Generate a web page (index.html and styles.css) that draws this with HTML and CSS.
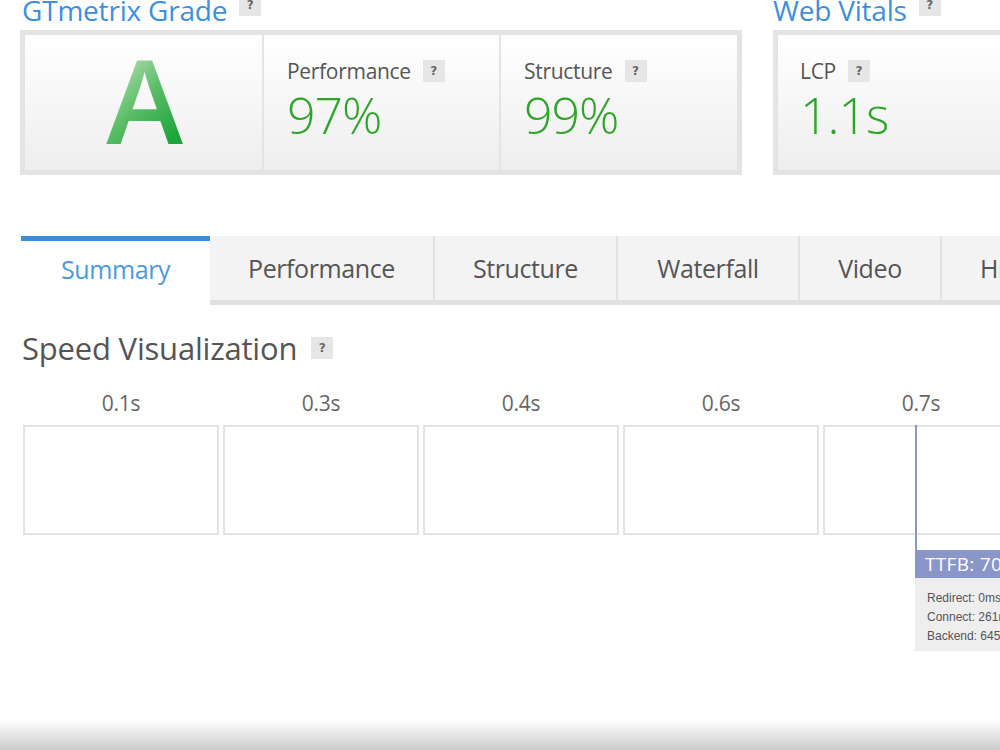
FILE: index.html
```html
<!DOCTYPE html>
<html lang="en">

<head>
    <meta charset="utf-8"/>
    <title>GTmetrix Report</title>
    <link rel="stylesheet" href="styles.css">
</head>

<body>
<div class="report">
    <div class="scores">
        <div class="gradeBlock">
            <h2 class="boxTitle">GTmetrix Grade <span class="help">?</span></h2>
            <div class="box">
                <div class="cell gradeCell"><span class="grade">A</span></div>
                <div class="cell">
                    <div class="label">Performance <span class="help">?</span></div>
                    <div class="value">97%</div>
                </div>
                <div class="cell">
                    <div class="label">Structure <span class="help">?</span></div>
                    <div class="value">99%</div>
                </div>
            </div>
        </div>
        <div class="vitalsBlock">
            <h2 class="boxTitle">Web Vitals <span class="help">?</span></h2>
            <div class="box">
                <div class="cell">
                    <div class="label">LCP <span class="help">?</span></div>
                    <div class="value">1.1s</div>
                </div>
                <div class="cell">
                    <div class="label">TBT <span class="help">?</span></div>
                    <div class="value">0ms</div>
                </div>
            </div>
        </div>
    </div>

    <ul class="tabs">
        <li class="tab active">Summary</li>
        <li class="tab tPerf">Performance</li>
        <li class="tab tStruct">Structure</li>
        <li class="tab tWater">Waterfall</li>
        <li class="tab tVideo">Video</li>
        <li class="tab tHist">History</li>
    </ul>

    <h3 class="sectionTitle">Speed Visualization <span class="help">?</span></h3>

    <div class="film">
        <div class="frame"><div class="time">0.1s</div><div class="shot"></div></div>
        <div class="frame"><div class="time">0.3s</div><div class="shot"></div></div>
        <div class="frame"><div class="time">0.4s</div><div class="shot"></div></div>
        <div class="frame"><div class="time">0.6s</div><div class="shot"></div></div>
        <div class="frame"><div class="time">0.7s</div><div class="shot"></div></div>

        <div class="marker">
            <div class="mLine"></div>
            <div class="mHead">TTFB: 706ms</div>
            <div class="mBody">
                Redirect: 0ms<br>
                Connect: 261ms<br>
                Backend: 645ms
            </div>
        </div>
    </div>
</div>
<div class="fade"></div>
</body>
</html>
```

FILE: styles.css
```css
* {
    padding: 0;
    margin: 0;
}

html,
body {
    height: 100%;
    overflow: hidden;
    background: #fff;
}

body {
    font-family: "Open Sans", "Noto Sans", sans-serif;
    color: #555;
    position: relative;
}

.report {
    width: 1300px;
    padding-left: 20px;
}

.scores {
    display: flex;
    gap: 31px;
    margin-top: -10px;
}

.boxTitle {
    font-weight: normal;
    font-size: 28px;
    line-height: 34px;
    color: #3d8fdc;
    letter-spacing: -0.2px;
    padding-left: 2px;
    height: 40px;
    display: flex;
    align-items: center;
    gap: 12px;
}

.vitalsBlock .boxTitle {
    padding-left: 0;
}

.help {
    display: inline-block;
    width: 22px;
    height: 22px;
    line-height: 22px;
    text-align: center;
    background-color: #e6e6e6;
    color: #666;
    font-family: "DejaVu Sans", sans-serif;
    font-weight: bold;
    font-size: 12px;
    letter-spacing: 0;
}

.boxTitle .help {
    height: 20px;
    line-height: 18px;
    margin-top: -8px;
}

.box {
    display: flex;
    border: 5px solid #e3e3e3;
    height: 135px;
    background: linear-gradient(#fff, #eee);
}

.gradeBlock .box {
    width: 712px;
}

.vitalsBlock .box {
    width: 480px;
}

.cell {
    width: 237px;
    padding: 24px 0 0 23px;
    box-sizing: border-box;
    border-left: 2px solid #e4e4e4;
}

.cell:first-child {
    border-left: none;
}

.vitalsBlock .cell:first-child {
    padding-left: 22px;
}

.gradeCell {
    padding: 0;
    display: flex;
    align-items: center;
    justify-content: center;
}

.grade {
    font-size: 116px;
    line-height: 1;
    font-weight: 600;
    background: linear-gradient(135deg, #b8e0b1 15%, #5cbd68 50%, #1ea43c 85%);
    -webkit-background-clip: text;
    background-clip: text;
    color: transparent;
    margin-top: -8px;
    margin-left: 2px;
}

.label {
    font-size: 21px;
    line-height: 24px;
    color: #555;
    letter-spacing: -0.3px;
    display: flex;
    align-items: center;
    gap: 12px;
}

.value {
    font-size: 50px;
    line-height: 46px;
    font-weight: 300;
    color: #2ea52a;
    letter-spacing: -1px;
    margin-top: 9px;
}

.tabs {
    list-style: none;
    display: flex;
    margin-top: 61px;
    padding-left: 1px;
}

.tab {
    height: 64px;
    line-height: 64px;
    text-align: center;
    font-size: 25px;
    color: #555;
    letter-spacing: -0.4px;
    background-color: #f3f3f3;
    border-left: 2px solid #e2e2e2;
    border-bottom: 5px solid #e0e0e0;
}

.tab.active {
    width: 189px;
    background-color: #fff;
    color: #4a9ae0;
    border-left: none;
    border-top: 5px solid #3b8fd9;
    border-bottom: 5px solid #fff;
    height: 59px;
    line-height: 56px;
}

.tPerf {
    width: 223px;
    border-left: none;
}

.tStruct {
    width: 181px;
}

.tWater {
    width: 180px;
}

.tVideo {
    width: 140px;
}

.tHist {
    width: 160px;
    text-align: left;
    padding-left: 38px;
}

.sectionTitle {
    font-weight: normal;
    font-size: 31px;
    line-height: 40px;
    color: #555;
    letter-spacing: -0.2px;
    margin-top: 23px;
    padding-left: 2px;
    display: flex;
    align-items: center;
    gap: 14px;
}

.film {
    position: relative;
    display: flex;
    gap: 4px;
    margin-top: 23px;
    padding-left: 3px;
}

.frame {
    width: 196px;
}

.time {
    text-align: center;
    font-size: 21px;
    line-height: 24px;
    color: #666;
    letter-spacing: -0.3px;
    height: 34px;
}

.shot {
    height: 106px;
    border: 2px solid #e3e3e3;
}

.marker {
    position: absolute;
    left: 895px;
    top: 34px;
}

.mLine {
    width: 2px;
    height: 125px;
    background-color: #8a96c8;
}

.mHead {
    width: 160px;
    height: 28px;
    line-height: 28px;
    padding-left: 10px;
    background-color: #8a96c8;
    color: #fff;
    font-size: 19px;
    letter-spacing: 0.3px;
}

.mBody {
    width: 158px;
    padding: 11px 0 5px 12px;
    background-color: #eee;
    font-family: "Liberation Sans", Arial, sans-serif;
    font-size: 12px;
    line-height: 19px;
    color: #555;
}

.fade {
    position: absolute;
    left: 0;
    right: 0;
    bottom: 0;
    height: 30px;
    background: linear-gradient(rgba(255, 255, 255, 0), #cbcbcb);
}
```
